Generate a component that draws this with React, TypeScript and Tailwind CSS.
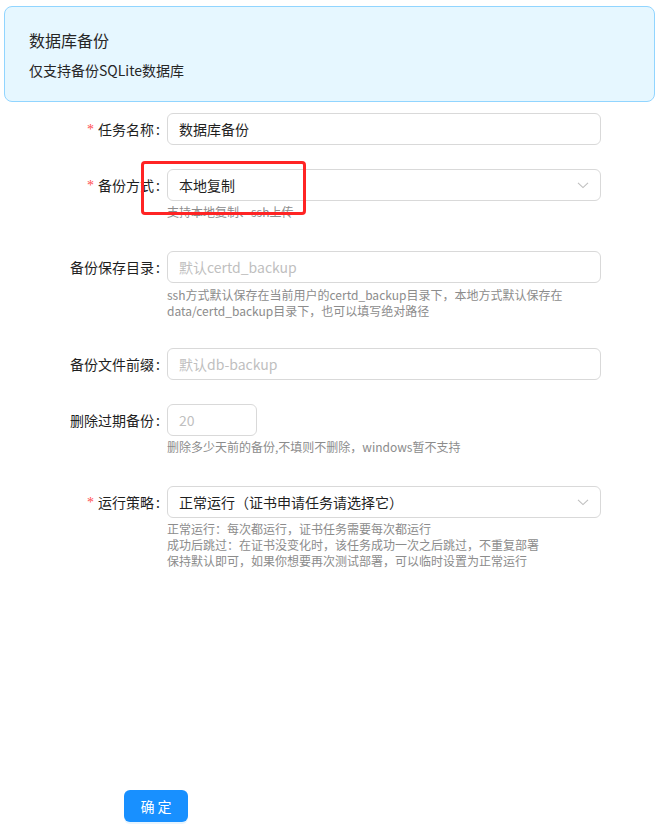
import React from "react";

const font = { fontFamily: '"Noto Sans CJK SC", "Liberation Sans", sans-serif' };

function Label({ text, required }: { text: string; required?: boolean }) {
  return (
    <div className="w-[167px] shrink-0 h-[32px] flex items-center justify-end pr-[7px] text-[14px] text-[#1f1f1f]">
      {required && <span className="text-[#ff4d4f] mr-[4px] text-[14px]" style={{ fontFamily: '"Liberation Serif", serif' }}>*</span>}
      <span>{text}</span>
      <span className="ml-[2px]">:</span>
    </div>
  );
}

function Chevron() {
  return (
    <svg width="12" height="12" viewBox="0 0 12 12" fill="none" className="text-[#bfbfbf]">
      <path d="M1 3.8 L6 8.6 L11 3.8" stroke="currentColor" strokeWidth="1.1" />
    </svg>
  );
}

function Help({ lines }: { lines: string[] }) {
  return (
    <div className="mt-[3px] text-[12px] leading-[16px] text-[#8c8c8c]">
      {lines.map((l, i) => (
        <div key={i}>{l}</div>
      ))}
    </div>
  );
}

export default function App() {
  return (
    <div className="relative w-[663px] h-[832px] bg-white overflow-hidden" style={font}>
      <div className="mt-[6px] ml-[4px] w-[651px] h-[96px] border border-[#91d5ff] bg-[#e6f7ff] rounded-[8px] px-[24px] pt-[21px]">
        <div className="text-[16px] leading-[24px] text-[#262626]">数据库备份</div>
        <div className="mt-[7px] text-[14px] leading-[22px] text-[#262626]">仅支持备份SQLite数据库</div>
      </div>

      {/* row 1 */}
      <div className="flex mt-[11px]">
        <Label text="任务名称" required />
        <div className="w-[434px] h-[32px] border border-[#d9d9d9] rounded-[6px] px-[11px] flex items-center text-[14px] text-[#1f1f1f]">
          数据库备份
        </div>
      </div>

      {/* row 2 */}
      <div className="flex mt-[24px]">
        <Label text="备份方式" required />
        <div className="w-[434px]">
          <div className="h-[32px] border border-[#d9d9d9] rounded-[6px] pl-[11px] pr-[11px] flex items-center justify-between text-[14px] text-[#1f1f1f]">
            <span>本地复制</span>
            <Chevron />
          </div>
          <Help lines={["支持本地复制、ssh上传"]} />
        </div>
      </div>

      {/* row 3 */}
      <div className="flex mt-[31px]">
        <Label text="备份保存目录" />
        <div className="w-[434px]">
          <div className="h-[32px] border border-[#d9d9d9] rounded-[6px] px-[11px] flex items-center text-[14px] text-[#bfbfbf]">
            默认certd_backup
          </div>
          <div className="mt-[4px] text-[12px] leading-[16px] text-[#8c8c8c]">
            ssh方式默认保存在当前用户的certd_backup目录下，本地方式默认保存在<br />data/certd_backup目录下，也可以填写绝对路径
          </div>
        </div>
      </div>

      {/* row 4 */}
      <div className="flex mt-[29px]">
        <Label text="备份文件前缀" />
        <div className="w-[434px] h-[32px] border border-[#d9d9d9] rounded-[6px] px-[11px] flex items-center text-[14px] text-[#bfbfbf]">
          默认db-backup
        </div>
      </div>

      {/* row 5 */}
      <div className="flex mt-[24px]">
        <Label text="删除过期备份" />
        <div className="w-[434px]">
          <div className="w-[90px] h-[32px] border border-[#d9d9d9] rounded-[6px] px-[11px] flex items-center text-[14px] text-[#bfbfbf]">
            20
          </div>
          <Help lines={["删除多少天前的备份,不填则不删除，windows暂不支持"]} />
        </div>
      </div>

      {/* row 6 */}
      <div className="flex mt-[31px]">
        <Label text="运行策略" required />
        <div className="w-[434px]">
          <div className="h-[32px] border border-[#d9d9d9] rounded-[6px] pl-[11px] pr-[11px] flex items-center justify-between text-[14px] text-[#1f1f1f]">
            <span>正常运行（证书申请任务请选择它）</span>
            <Chevron />
          </div>
          <Help
            lines={[
              "正常运行：每次都运行，证书任务需要每次都运行",
              "成功后跳过：在证书没变化时，该任务成功一次之后跳过，不重复部署",
              "保持默认即可，如果你想要再次测试部署，可以临时设置为正常运行",
            ]}
          />
        </div>
      </div>

      <div className="mt-[221px] ml-[124px]">
        <button className="w-[64px] h-[32px] rounded-[6px] bg-[#1890ff] text-white text-[14px] flex items-center justify-center shadow-[0_2px_0_rgba(5,145,255,0.1)]">
          确 定
        </button>
      </div>

      {/* annotation overlay */}
      <div className="absolute left-[141px] top-[161px] w-[165px] h-[54px] border-[3px] border-[#ff2424] rounded-[4px] pointer-events-none" />
    </div>
  );
}
